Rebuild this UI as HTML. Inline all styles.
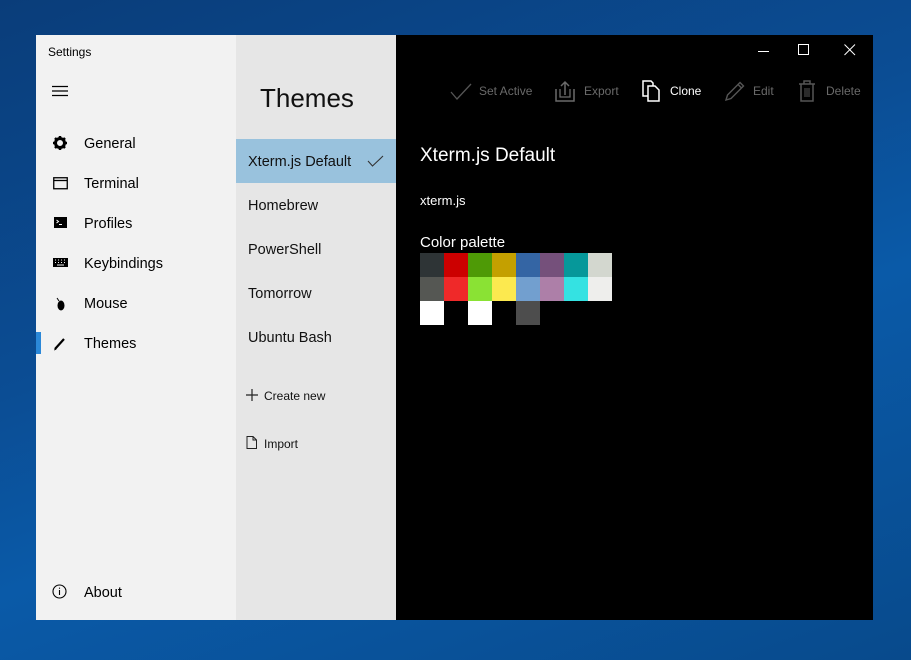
<!DOCTYPE html>
<html><head><meta charset="utf-8"><style>
*{margin:0;padding:0;box-sizing:border-box}
body{width:911px;height:660px;overflow:hidden;position:relative;font-family:"Liberation Sans",sans-serif;
background:linear-gradient(160deg,#0a3d7a 0%,#0b4d94 40%,#0a5aa8 60%,#084a8c 100%)}
.win{position:absolute;left:36px;top:35px;width:837px;height:585px;background:#000}
.nav{position:absolute;left:0;top:0;width:200px;height:585px;background:#f2f2f2;color:#000}
.list{position:absolute;left:200px;top:0;width:160px;height:585px;background:#e6e6e6}
.abs{position:absolute;white-space:nowrap}
.nav .item{position:absolute;left:48px;font-size:14.5px}
.nav svg{position:absolute}
.list .it{position:absolute;left:12px;font-size:14.5px;color:#111}
.tb{position:absolute;top:49px;font-size:12px;color:#6a6a6a}
.sw{position:absolute;width:24px;height:24px}
</style></head><body>
<div class="win">
 <div class="nav">
  <div class="abs" style="left:12px;top:10px;font-size:12px">Settings</div>
  <svg style="left:16px;top:50px" width="17" height="12"><path d="M0 1.5h16M0 6h16M0 10.5h16" stroke="#000" stroke-width="1.2"/></svg>
  <svg style="left:17px;top:101px" width="14" height="14" viewBox="0 0 14 14"><circle cx="7" cy="7" r="4.5" fill="none" stroke="#000" stroke-width="3"/><path d="M7 0v3M7 11v3M0 7h3M11 7h3M2 2l2 2M10 10l2 2M2 12l2-2M10 4l2-2" stroke="#000" stroke-width="2.5"/></svg>
  <div class="item" style="top:101px">General</div>
  <svg style="left:17px;top:142px" width="15" height="13"><rect x=".75" y=".75" width="13.5" height="11" fill="none" stroke="#000" stroke-width="1.3"/><path d="M1 3.5h13" stroke="#000" stroke-width="1.3"/></svg>
  <div class="item" style="top:141px">Terminal</div>
  <svg style="left:18px;top:182px" width="13" height="11"><rect width="13" height="11" fill="#000"/><path d="M2.5 3l2 1.5-2 1.5M5 7.5h3" stroke="#fff" stroke-width="1"/></svg>
  <div class="item" style="top:181px">Profiles</div>
  <svg style="left:17px;top:223px" width="15" height="9"><rect width="15" height="9" fill="#000"/><path d="M2 2h1M5 2h1M8 2h1M11 2h1M2 4.5h1M5 4.5h1M8 4.5h1M11 4.5h1M4 7h7" stroke="#f2f2f2" stroke-width="1"/></svg>
  <div class="item" style="top:221px">Keybindings</div>
  <svg style="left:20px;top:261px" width="9" height="15"><path d="M1 2l2 3" stroke="#000"/><ellipse cx="5" cy="9.5" rx="3.5" ry="5" fill="#000"/></svg>
  <div class="item" style="top:261px">Mouse</div>
  <div class="abs" style="left:0;top:297px;width:5px;height:22px;background:#2b88d8"></div>
  <svg style="left:17px;top:302px" width="14" height="14"><path d="M2 12l9-10" stroke="#000" stroke-width="2.2"/><path d="M1 13.5l2.5-1 -1.5-1.5z" fill="#000"/></svg>
  <div class="item" style="top:301px">Themes</div>
  <svg style="left:16px;top:549px" width="15" height="15"><circle cx="7.5" cy="7.5" r="6.5" fill="none" stroke="#000" stroke-width="1.1"/><path d="M7.5 6v5M7.5 3.6v1.2" stroke="#000" stroke-width="1.1"/></svg>
  <div class="item" style="top:550px">About</div>
 </div>
 <div class="list">
  <div class="abs" style="left:24px;top:48px;font-size:26px;color:#111">Themes</div>
  <div class="abs" style="left:0;top:104px;width:160px;height:44px;background:#99c2dd"></div>
  <div class="it" style="top:119px">Xterm.js Default</div>
  <svg class="abs" style="left:131px;top:120px" width="17" height="12"><path d="M1 6l4.5 5L16 1" fill="none" stroke="#333" stroke-width="1.1"/></svg>
  <div class="it" style="top:163px">Homebrew</div>
  <div class="it" style="top:207px">PowerShell</div>
  <div class="it" style="top:251px">Tomorrow</div>
  <div class="it" style="top:295px">Ubuntu Bash</div>
  <svg class="abs" style="left:10px;top:354px" width="12" height="12"><path d="M6 0v12M0 6h12" stroke="#222" stroke-width="1.2"/></svg>
  <div class="abs" style="left:28px;top:354px;font-size:12px;color:#111">Create new</div>
  <svg class="abs" style="left:10px;top:401px" width="12" height="13"><path d="M1 .5h6l3.5 3.5v8.5H1z" fill="none" stroke="#222"/><path d="M7 .5v3.5h3.5" fill="none" stroke="#222"/></svg>
  <div class="abs" style="left:28px;top:402px;font-size:12px;color:#111">Import</div>
 </div>
 <svg class="abs" style="left:722px;top:10px" width="12" height="12"><path d="M0 6.5h11" stroke="#fff"/></svg>
 <svg class="abs" style="left:762px;top:9px" width="12" height="12"><rect x=".5" y=".5" width="10" height="10" fill="none" stroke="#fff"/></svg>
 <svg class="abs" style="left:808px;top:9px" width="12" height="12"><path d="M.5 .5l10.5 10.5M11 .5L.5 11" stroke="#fff"/></svg>
 <svg class="abs" style="left:414px;top:47px" width="22" height="20"><path d="M1 10l6 7L21 2" fill="none" stroke="#555" stroke-width="1.3"/></svg>
 <div class="tb" style="left:443px">Set Active</div>
 <svg class="abs" style="left:519px;top:45px" width="20" height="22"><path d="M1 9v12h18V9" fill="none" stroke="#6a6a6a" stroke-width="1.5"/><path d="M5 9v8h10V9" fill="none" stroke="#6a6a6a" stroke-width="1.3"/><path d="M10 15V2M6 6l4-4 4 4" fill="none" stroke="#6a6a6a" stroke-width="1.5"/></svg>
 <div class="tb" style="left:548px">Export</div>
 <svg class="abs" style="left:606px;top:45px" width="20" height="22"><path d="M1 1h8l2 2v13H1z" fill="none" stroke="#fff" stroke-width="1.5"/><path d="M6 6h7l4 4v11H6z" fill="#000" stroke="#fff" stroke-width="1.5"/></svg>
 <div class="tb" style="left:634px;color:#fff">Clone</div>
 <svg class="abs" style="left:688px;top:45px" width="22" height="22"><path d="M2 20l1.5-5L16 2.5l3.5 3.5L7 18.5z M14 4.5l3.5 3.5" fill="none" stroke="#555" stroke-width="1.4"/></svg>
 <div class="tb" style="left:717px">Edit</div>
 <svg class="abs" style="left:762px;top:45px" width="18" height="22"><path d="M1 4h16M6 4V1h6v3M3 4v17h12V4" fill="none" stroke="#555" stroke-width="1.5"/><path d="M7 8v9M9 8v9M11 8v9" stroke="#555"/></svg>
 <div class="tb" style="left:790px">Delete</div>
 <div class="abs" style="left:384px;top:110px;font-size:19px;color:#fff">Xterm.js Default</div>
 <div class="abs" style="left:384px;top:158px;font-size:13px;color:#fff">xterm.js</div>
 <div class="abs" style="left:384px;top:199px;font-size:15px;color:#fff">Color palette</div>
 <div class="abs" style="left:384px;top:218px">
  <div class="sw" style="left:0;top:0;background:#2e3436"></div>
  <div class="sw" style="left:24px;top:0;background:#cc0000"></div>
  <div class="sw" style="left:48px;top:0;background:#4e9a06"></div>
  <div class="sw" style="left:72px;top:0;background:#c4a000"></div>
  <div class="sw" style="left:96px;top:0;background:#3465a4"></div>
  <div class="sw" style="left:120px;top:0;background:#75507b"></div>
  <div class="sw" style="left:144px;top:0;background:#06989a"></div>
  <div class="sw" style="left:168px;top:0;background:#d3d7cf"></div>
  <div class="sw" style="left:0;top:24px;background:#555753"></div>
  <div class="sw" style="left:24px;top:24px;background:#ef2929"></div>
  <div class="sw" style="left:48px;top:24px;background:#8ae234"></div>
  <div class="sw" style="left:72px;top:24px;background:#fce94f"></div>
  <div class="sw" style="left:96px;top:24px;background:#729fcf"></div>
  <div class="sw" style="left:120px;top:24px;background:#ad7fa8"></div>
  <div class="sw" style="left:144px;top:24px;background:#34e2e2"></div>
  <div class="sw" style="left:168px;top:24px;background:#eeeeec"></div>
  <div class="sw" style="left:0;top:48px;background:#fff"></div>
  <div class="sw" style="left:48px;top:48px;background:#fff"></div>
  <div class="sw" style="left:96px;top:48px;background:#4d4d4d"></div>
 </div>
</div>
</body></html>
